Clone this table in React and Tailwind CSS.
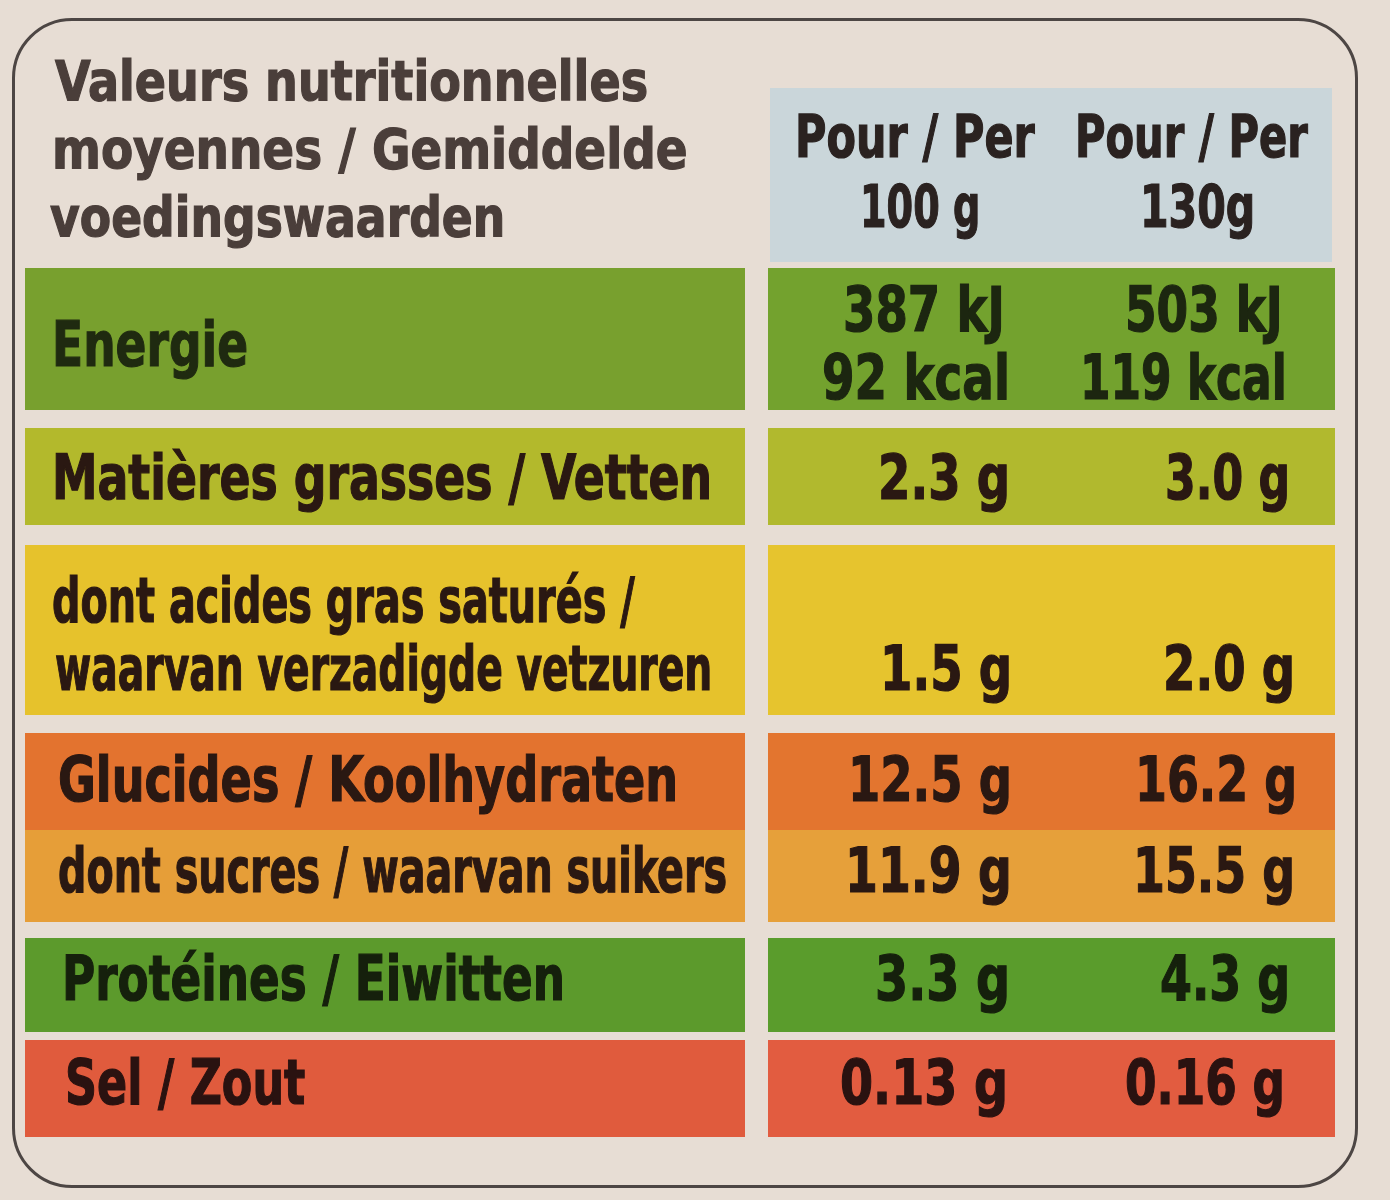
import { useLayoutEffect, useRef, useState } from 'react';

function Fit({ className = '', children }) {
  const box = useRef(null);
  const inner = useRef(null);
  const [s, setS] = useState(1);
  useLayoutEffect(() => {
    const w = box.current.clientWidth;
    const n = inner.current.offsetWidth;
    if (n) setS(w / n);
  }, []);
  return (
    <div ref={box} className={`shrink-0 whitespace-nowrap ${className}`}>
      <span ref={inner} className="inline-block origin-left" style={{ transform: `scaleX(${s})` }}>
        {children}
      </span>
    </div>
  );
}

export default function App() {
  const font = { fontFamily: '"DejaVu Sans Condensed", "Liberation Sans Narrow", "Liberation Sans", sans-serif', fontStretch: 'condensed' };
  return (
    <div className="w-[1390px] h-[1200px] bg-[#e7ddd4] overflow-hidden pt-[18px] pl-[12px]" style={font}>
      <div className="w-[1346px] h-[1170px] border-[3px] border-[#4d4644] rounded-[60px] pl-[10px] font-bold [-webkit-text-stroke:1.2px_currentColor]">
        {/* header */}
        <div className="flex h-[244px]">
          <div className="w-[720px] pt-[26px] text-[#4a3e3a] text-[56px] leading-[68px]">
            <Fit className="ml-[30px] w-[593px]">Valeurs nutritionnelles</Fit>
            <Fit className="ml-[27px] w-[636px]">moyennes / Gemiddelde</Fit>
            <Fit className="ml-[25px] w-[455px]">voedingswaarden</Fit>
          </div>
          <div className="ml-[25px] mt-[67px] w-[562px] h-[174px] bg-[#cad6da] pt-[14px] text-[#2a2220] text-[58px] leading-[70px]">
            <div className="flex">
              <Fit className="ml-[25px] w-[240px]">Pour / Per</Fit>
              <Fit className="ml-[40px] w-[233px]">Pour / Per</Fit>
            </div>
            <div className="flex">
              <Fit className="ml-[90px] w-[120px]">100 g</Fit>
              <Fit className="ml-[160px] w-[115px]">130g</Fit>
            </div>
          </div>
        </div>

        {/* energie */}
        <div className="flex mt-[3px] text-[62px] leading-[68px]">
          <div className="w-[720px] h-[142px] bg-[#78a02e] pt-[43px] text-[#1f2a10]">
            <Fit className="ml-[27px] w-[196px]">Energie</Fit>
          </div>
          <div className="ml-[23px] w-[567px] h-[142px] bg-[#73a22e] pt-[8px] text-[#1c2610]">
            <div className="flex">
              <Fit className="ml-[75px] w-[162px]">387 kJ</Fit>
              <Fit className="ml-[120px] w-[158px]">503 kJ</Fit>
            </div>
            <div className="flex">
              <Fit className="ml-[54px] w-[188px]">92 kcal</Fit>
              <Fit className="ml-[70px] w-[207px]">119 kcal</Fit>
            </div>
          </div>
        </div>

        {/* matieres grasses */}
        <div className="flex mt-[18px] text-[62px] leading-[68px] text-[#2a1812]">
          <div className="w-[720px] h-[97px] bg-[#b3b92c] pt-[16px]">
            <Fit className="ml-[27px] w-[660px]">Matières grasses / Vetten</Fit>
          </div>
          <div className="ml-[23px] w-[567px] h-[97px] bg-[#b1b92e] pt-[16px] flex items-start">
            <Fit className="ml-[110px] w-[132px]">2.3 g</Fit>
            <Fit className="ml-[155px] w-[125px]">3.0 g</Fit>
          </div>
        </div>

        {/* satures */}
        <div className="flex mt-[20px] text-[62px] leading-[68px] text-[#2a1812]">
          <div className="w-[720px] h-[170px] bg-[#e6c22c] pt-[22px]">
            <Fit className="ml-[27px] w-[583px]">dont acides gras saturés /</Fit>
            <Fit className="ml-[30px] w-[657px]">waarvan verzadigde vetzuren</Fit>
          </div>
          <div className="ml-[23px] w-[567px] h-[170px] bg-[#e6c42e] pt-[90px] flex items-start">
            <Fit className="ml-[112px] w-[132px]">1.5 g</Fit>
            <Fit className="ml-[151px] w-[132px]">2.0 g</Fit>
          </div>
        </div>

        {/* glucides */}
        <div className="flex mt-[18px] text-[62px] leading-[68px] text-[#2a1812]">
          <div className="w-[720px] h-[97px] bg-[#e3732f] pt-[13px]">
            <Fit className="ml-[33px] w-[620px]">Glucides / Koolhydraten</Fit>
          </div>
          <div className="ml-[23px] w-[567px] h-[97px] bg-[#e3752f] pt-[13px] flex items-start">
            <Fit className="ml-[80px] w-[164px]">12.5 g</Fit>
            <Fit className="ml-[123px] w-[162px]">16.2 g</Fit>
          </div>
        </div>

        {/* sucres */}
        <div className="flex text-[62px] leading-[68px] text-[#2a1812]">
          <div className="w-[720px] h-[92px] bg-[#e69e38] pt-[7px]">
            <Fit className="ml-[33px] w-[669px]">dont sucres / waarvan suikers</Fit>
          </div>
          <div className="ml-[23px] w-[567px] h-[92px] bg-[#e6a03a] pt-[7px] flex items-start">
            <Fit className="ml-[77px] w-[167px]">11.9 g</Fit>
            <Fit className="ml-[121px] w-[162px]">15.5 g</Fit>
          </div>
        </div>

        {/* proteines */}
        <div className="flex mt-[16px] text-[62px] leading-[68px] text-[#15200c]">
          <div className="w-[720px] h-[94px] bg-[#5c9a2c] pt-[7px]">
            <Fit className="ml-[37px] w-[503px]">Protéines / Eiwitten</Fit>
          </div>
          <div className="ml-[23px] w-[567px] h-[94px] bg-[#5a9c2c] pt-[7px] flex items-start">
            <Fit className="ml-[107px] w-[135px]">3.3 g</Fit>
            <Fit className="ml-[150px] w-[130px]">4.3 g</Fit>
          </div>
        </div>

        {/* sel */}
        <div className="flex mt-[8px] text-[62px] leading-[68px] text-[#2a1210]">
          <div className="w-[720px] h-[97px] bg-[#e05b3d] pt-[9px]">
            <Fit className="ml-[40px] w-[240px]">Sel / Zout</Fit>
          </div>
          <div className="ml-[23px] w-[567px] h-[97px] bg-[#e25c40] pt-[9px] flex items-start">
            <Fit className="ml-[72px] w-[168px]">0.13 g</Fit>
            <Fit className="ml-[117px] w-[160px]">0.16 g</Fit>
          </div>
        </div>
      </div>
    </div>
  );
}
